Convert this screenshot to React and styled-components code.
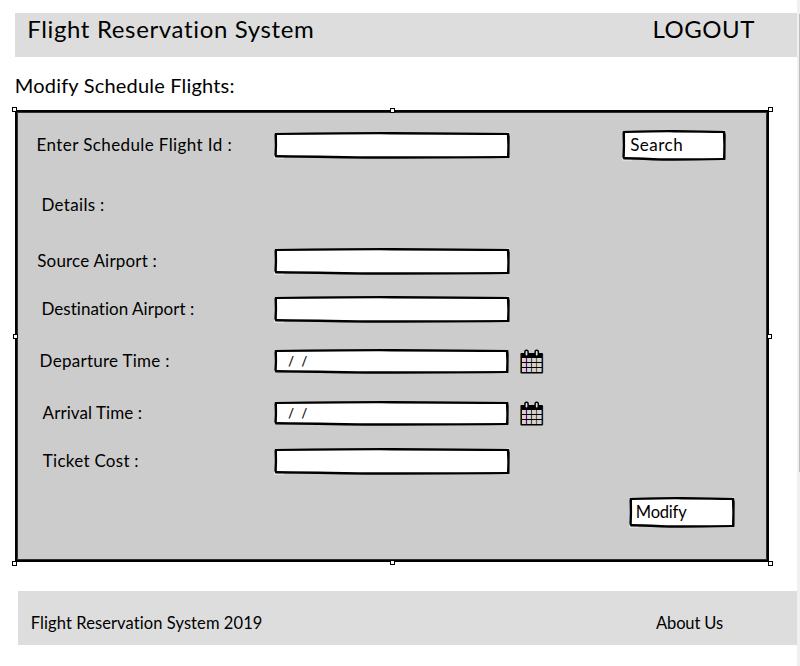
import React from 'react';
import styled, { createGlobalStyle } from 'styled-components';

const GlobalStyle = createGlobalStyle`
  * { box-sizing: border-box; }
  html, body { margin: 0; padding: 0; background: #fff; overflow: hidden; }
  body { font-family: Lato, "Open Sans", sans-serif; color: #000; }
`;

const Page = styled.div`
  display: flex;
  width: 800px;
  height: 666px;
`;

const Content = styled.main`
  display: flex;
  flex-direction: column;
  width: 797px;
  padding-top: 13px;
`;

const ScrollTrack = styled.div`
  width: 3px;
  height: 666px;
  padding: 14px 0 0 2px;
  background: #f0f0f0;
`;

const ScrollThumb = styled.div`
  width: 1px;
  height: 458px;
  background: #bdbdbd;
`;

const Text = styled.span`
  font-size: ${(p) => p.$size || 17}px;
  line-height: ${(p) => p.$line || 20}px;
  letter-spacing: ${(p) => p.$track || 0}px;
  white-space: pre;
`;

const Header = styled.header`
  display: flex;
  justify-content: space-between;
  align-items: flex-start;
  height: 44px;
  margin-left: 15px;
  padding: 0 42px 0 12.2px;
  background: #ddd;
`;

const Heading = styled.h1`
  display: flex;
  height: 53px;
  margin: 0;
  padding: 17px 0 0 14.8px;
  font-weight: 400;
`;

const Panel = styled.section`
  position: relative;
  display: grid;
  grid-template-rows: 67px 53px 59px 37px 67px 37px 59px 43px;
  width: 754px;
  height: 452px;
  margin-left: 15px;
  border: 2px solid #000;
  background: #ccc;
  box-shadow: inset 0 0 0 1px #2e2e2e;
`;

const Handle = styled.i`
  position: absolute;
  left: ${(p) => p.$x}px;
  top: ${(p) => p.$y}px;
  width: 5px;
  height: 5px;
  border: 1px solid #000;
  background: #fff;
`;

const Row = styled.div`
  display: flex;
  align-items: center;
`;

const Label = styled.label`
  display: flex;
  width: 257px;
  padding: 0 0 1px ${(p) => p.$indent}px;
`;

const Box = styled.div`
  position: relative;
  display: flex;
  align-items: center;
  width: ${(p) => p.$w}px;
  height: ${(p) => p.$h}px;
  padding: 0 0 1px ${(p) => p.$pad || 0}px;
  margin-left: ${(p) => p.$gap || 0}px;
`;

const Outline = styled.svg`
  position: absolute;
  left: 0;
  top: 0;
  overflow: visible;
`;

const BoxText = styled(Text)`
  position: relative;
`;

const DateMask = styled.span`
  position: relative;
  display: flex;
  gap: 7.6px;
  padding-top: 1px;
  font-size: 12.5px;
  line-height: 16px;
  -webkit-text-stroke: 0.2px #000;
`;

const CalendarIcon = styled.svg`
  margin-left: 11px;
`;

const Footer = styled.footer`
  display: flex;
  justify-content: space-between;
  align-items: center;
  height: 54px;
  margin: 29px 0 0 18px;
  padding: 10px 74px 0 12.8px;
  background: #ddd;
`;

function SketchBox({ w, h, pad, gap, notch = true, children }) {
  const m = w / 2;
  return (
    <Box $w={w} $h={h} $pad={pad} $gap={gap}>
      <Outline width={w} height={h} viewBox={`0 0 ${w} ${h}`}>
        {notch && (
          <path d={`M${w - 3} 0.5H${w}V4H${w - 3}ZM0.4 ${h - 4}H10V${h - 0.6}H0.4Z`} fill="#f4f4f4" />
        )}
        <path
          d={`M1 0.9Q${m * 0.7} 0 ${m} 0.1Q${m * 1.6} 0.4 ${w - 0.8} 1.1L${w - 0.3} 5L${w - 0.5} ${h - 1.6}Q${w - 0.8} ${h - 0.8} ${w - 3} ${h - 0.9}Q${m} ${h} ${m * 0.6} ${h - 0.6}Q12 ${h - 1.4} 1.5 ${h - 1.4}L0.4 ${h - 4}L0.8 ${h / 2}L0.5 3Z`}
          fill="#000"
        />
        <path
          d={`M3 3Q${m} 1.8 ${m} 2.4Q${m * 1.6} 2.5 ${w - 3.1} 3.1L${w - 2.7} ${h / 2}L${w - 3} ${h - 3}Q${m} ${h - 2.5} ${m * 0.6} ${h - 3.1}Q12 ${h - 3.8} 2.8 ${h - 3.9}L3.1 ${h / 2}Z`}
          fill="#fff"
        />
      </Outline>
      {children}
    </Box>
  );
}

function Calendar() {
  return (
    <CalendarIcon width="24" height="26" viewBox="0 0 24 26">
      <rect x="0.4" y="4" width="22.6" height="20.4" rx="1" fill="#000" />
      <rect x="2" y="9" width="19.6" height="14" fill="#d2d4d2" />
      <path d="M6.5 9V23" stroke="#750075" strokeWidth="1.2" />
      <path d="M11.5 9V23" stroke="#504040" strokeWidth="1.2" />
      <path d="M16.5 9V23" stroke="#8a5434" strokeWidth="1.2" />
      <path d="M2 13.5H22M2 18.5H22" stroke="#000" strokeWidth="1.2" />
      <path d="M0.7 5V24" stroke="#9a6018" strokeWidth="0.6" />
      <path d="M22.8 5V24" stroke="#103c70" strokeWidth="0.6" />
      <rect x="4.9" y="1.3" width="3.2" height="6" rx="1.5" fill="#dde4e4" stroke="#000" strokeWidth="1.5" />
      <rect x="15.1" y="1.3" width="3.2" height="6" rx="1.5" fill="#dde4e4" stroke="#000" strokeWidth="1.5" />
    </CalendarIcon>
  );
}

function Field({ label, indent, track, date, children }) {
  return (
    <Row>
      <Label $indent={indent}><Text $track={track}>{label}</Text></Label>
      {date ? (
        <>
          <SketchBox w={235} h={25} pad={14.3} notch={false}>
            <DateMask><span>/</span><span>/</span></DateMask>
          </SketchBox>
          <Calendar />
        </>
      ) : (
        <SketchBox w={236} h={27} />
      )}
      {children}
    </Row>
  );
}

const handles = [
  [-5, -5], [373, -4], [751, -5],
  [-4, 222], [750, 222],
  [-5, 449], [373, 448], [751, 449],
];

export default function App() {
  return (
    <>
      <GlobalStyle />
      <Page>
        <Content>
          <Header>
            <Text $size={24} $line={32} $track={0.64}>Flight Reservation System</Text>
            <Text $size={24} $line={32} $track={0.55}>LOGOUT</Text>
          </Header>
          <Heading>
            <Text $size={20} $line={23} $track={0.19}>Modify Schedule Flights:</Text>
          </Heading>
          <Panel>
            <Field label="Enter Schedule Flight Id :" indent={19.6} track={0.4}>
              <SketchBox w={104} h={31} gap={112.4} pad={7.8}>
                <BoxText $track={0.5}>Search</BoxText>
              </SketchBox>
            </Field>
            <Row>
              <Label $indent={24.4}><Text $track={0.33}>Details :</Text></Label>
            </Row>
            <Field label="Source Airport :" indent={20.2} track={0.2} />
            <Field label="Destination Airport :" indent={24.4} track={0.04} />
            <Field label="Departure Time :" indent={22.6} track={0.27} date />
            <Field label="Arrival Time :" indent={25.6} track={0.08} date />
            <Field label="Ticket Cost :" indent={25.8} track={0.27} />
            <Row>
              <SketchBox w={106} h={31} gap={611.8} pad={7}>
                <BoxText $size={16.5} $track={-0.2}>Modify</BoxText>
              </SketchBox>
            </Row>
            {handles.map(([x, y]) => <Handle key={`${x},${y}`} $x={x} $y={y} />)}
          </Panel>
          <Footer>
            <Text $size={16.5} $track={0.09}>Flight Reservation System 2019</Text>
            <Text $size={16.5} $track={-0.12}>About Us</Text>
          </Footer>
        </Content>
        <ScrollTrack><ScrollThumb /></ScrollTrack>
      </Page>
    </>
  );
}
